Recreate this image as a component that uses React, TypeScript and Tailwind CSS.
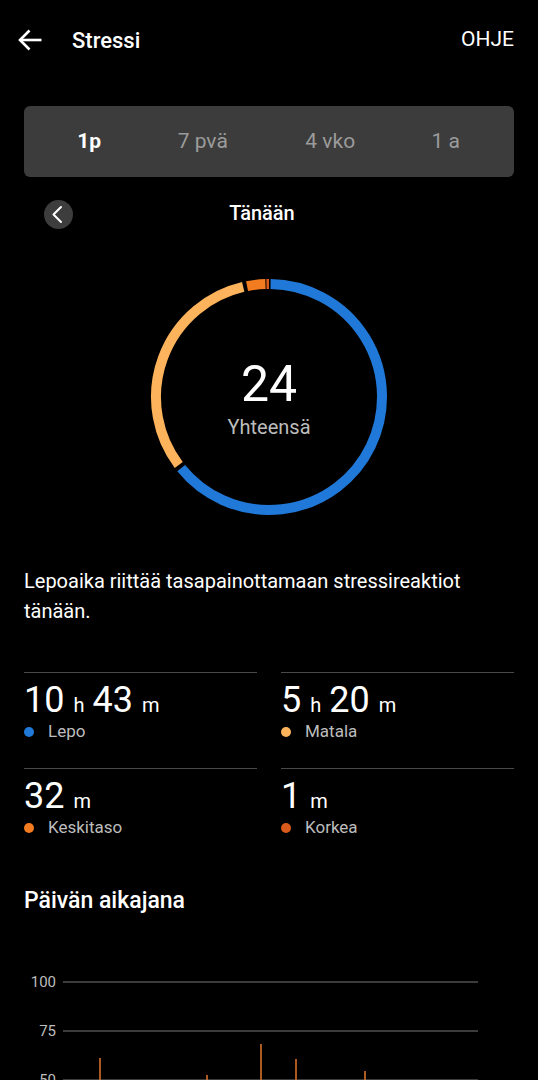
const R = 113;
const C = 119;

function arcPath(start: number, end: number) {
  const toXY = (deg: number) => {
    const rad = (deg * Math.PI) / 180;
    return [C + R * Math.sin(rad), C - R * Math.cos(rad)];
  };
  const [x1, y1] = toXY(start);
  const [x2, y2] = toXY(end);
  const large = end - start > 180 ? 1 : 0;
  return `M ${x1} ${y1} A ${R} ${R} 0 ${large} 1 ${x2} ${y2}`;
}

const segments = [
  { from: 0.8, to: 231, color: '#2079d8' },
  { from: 233, to: 346.8, color: '#fdb35b' },
  { from: 348.8, to: 358.2, color: '#f47c20' },
  { from: 358.7, to: 360, color: '#d95a1a' },
];

const stats = [
  { parts: [['10', 'h'], ['43', 'm']], label: 'Lepo', color: 'bg-[#2079d8]' },
  { parts: [['5', 'h'], ['20', 'm']], label: 'Matala', color: 'bg-[#fdb35b]' },
  { parts: [['32', 'm']], label: 'Keskitaso', color: 'bg-[#f47c20]' },
  { parts: [['1', 'm']], label: 'Korkea', color: 'bg-[#d95a1a]' },
];

const spikes = [
  { x: 100, top: 116 },
  { x: 207, top: 133 },
  { x: 261, top: 102 },
  { x: 296, top: 117 },
  { x: 365, top: 129 },
];

export default function App() {
  return (
    <div className="w-[538px] h-[1080px] overflow-hidden bg-black text-white font-['Roboto',sans-serif]">
      <div className="flex items-center h-[80px] pl-[17px] pr-6">
        <svg width="25" height="24" viewBox="0 0 25 24" fill="none" stroke="white" strokeWidth="2.6">
          <path d="M24.5 12H3" />
          <path d="M12.5 2.5 3 12l9.5 9.5" />
        </svg>
        <span className="ml-[30px] text-[22px] font-medium">Stressi</span>
        <span className="ml-auto text-[21px]">OHJE</span>
      </div>

      <div className="mx-6 mt-[26px] h-[71px] rounded-md bg-[#3c3c3c] grid grid-cols-4 items-center text-center text-[21px]">
        <span className="font-bold pl-[8px]">1p</span>
        <span className="text-[#9b9b9b] pr-[10px]">7 pvä</span>
        <span className="text-[#9b9b9b]">4 vko</span>
        <span className="text-[#9b9b9b] pr-[14px]">1 a</span>
      </div>

      <div className="grid grid-cols-[1fr_auto_1fr] items-center h-[72px] px-6">
        <div>
          <div className="ml-[20px] mt-[2px] w-[29px] h-[29px] rounded-full bg-[#3d3d3d]">
            <svg width="29" height="29" viewBox="0 0 29 29" fill="none" stroke="white" strokeWidth="2" strokeLinecap="round" strokeLinejoin="round">
              <path d="M17 7 9.5 14.5 17 22" />
            </svg>
          </div>
        </div>
        <span className="text-[20px] font-medium mr-[14px]">Tänään</span>
        <div />
      </div>

      <div className="mt-[29px] flex justify-center">
        <div className="grid">
          <svg width="238" height="238" viewBox="0 0 238 238" className="[grid-area:1/1]">
            {segments.map((s) => (
              <path key={s.from} d={arcPath(s.from, s.to)} stroke={s.color} strokeWidth="10" fill="none" />
            ))}
          </svg>
          <div className="[grid-area:1/1] flex flex-col items-center justify-center pt-[4px]">
            <span className="text-[50px] leading-[56px]">24</span>
            <span className="text-[20px] text-[#bdbdbd]">Yhteensä</span>
          </div>
        </div>
      </div>

      <p className="mt-[50px] px-6 text-[20px] leading-[30px]">
        Lepoaika riittää tasapainottamaan stressireaktiot tänään.
      </p>

      <div className="mt-[46px] px-6 grid grid-cols-2 gap-x-6">
        {stats.map((s) => (
          <div key={s.label} className="border-t border-[#4a4a4a] pt-[7px] pb-[24px]">
            <div className="h-[40px] flex items-baseline text-[36px] leading-[40px]">
              {s.parts.map(([v, u]) => (
                <span key={u} className="mr-[8px]">
                  {v}
                  <span className="text-[20px] ml-[9px]">{u}</span>
                </span>
              ))}
            </div>
            <div className="h-[24px] flex items-center">
              <span className={`w-[10px] h-[10px] rounded-full ${s.color}`} />
              <span className="ml-[14px] text-[17px] text-[#bdbdbd]">{s.label}</span>
            </div>
          </div>
        ))}
      </div>

      <h2 className="mt-[23px] px-6 text-[23px] leading-[28px] font-medium">Päivän aikajana</h2>

      <svg width="538" height="140" viewBox="0 0 538 140" className="mt-[27px] block">
        {[
          { y: 40, label: '100' },
          { y: 89, label: '75' },
          { y: 138, label: '50' },
        ].map((g) => (
          <g key={g.label}>
            <line x1="63" x2="478" y1={g.y} y2={g.y} stroke="#505050" strokeWidth="1.5" />
            <text
              x="56"
              y={g.y + 5}
              textAnchor="end"
              fill="#bdbdbd"
              fontSize="15"
              fontFamily="Roboto, sans-serif"
            >
              {g.label}
            </text>
          </g>
        ))}
        {spikes.map((s) => (
          <line key={s.x} x1={s.x} x2={s.x} y1={s.top} y2="160" stroke="#e5762c" strokeWidth="1.5" />
        ))}
      </svg>
    </div>
  );
}
